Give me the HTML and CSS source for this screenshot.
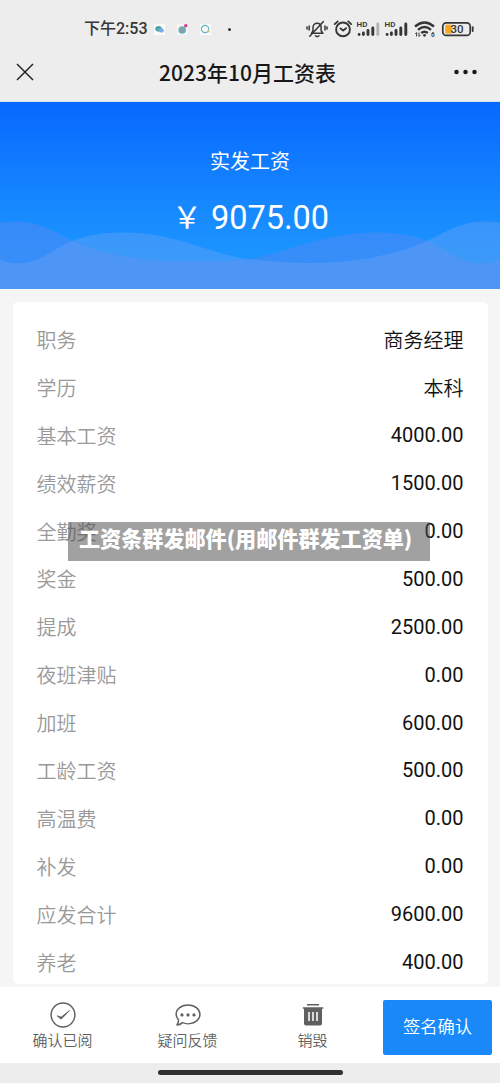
FILE: index.html
```html
<!DOCTYPE html>
<html lang="zh-CN">
<head>
<meta charset="utf-8">
<title>2023年10月工资表</title>
<link rel="stylesheet" href="styles.css">
</head>
<body>
<div class="screen">
  <div class="status">
    <span class="time">下午2:53</span>
    <span class="apps">
      <svg width="11" height="11" viewBox="0 0 11 11"><rect width="11" height="11" fill="#fafafa"/><ellipse cx="4.6" cy="4.8" rx="3.3" ry="2.8" fill="#4ba5a5"/><ellipse cx="7.3" cy="6.4" rx="2.6" ry="2.2" fill="#79aeea"/></svg>
      <svg width="11" height="11" viewBox="0 0 11 11"><rect width="11" height="11" fill="#f6f6f6"/><circle cx="5.2" cy="6" r="3.8" fill="#6bb0b5"/><path d="M3 5h4M3 7h4" stroke="#a58b9a" stroke-width=".8"/><circle cx="8.8" cy="1.8" r="1.8" fill="#d6408a"/></svg>
      <svg width="11" height="11" viewBox="0 0 11 11"><rect width="11" height="11" fill="#fafafa"/><circle cx="5" cy="5" r="3.6" fill="none" stroke="#68b3c5" stroke-width="1.2"/><path d="M7 8l2.6-.8" stroke="#e0c65a" stroke-width="1.5"/></svg>
    </span>
    <i class="dot"></i>
    <svg class="sys" width="170" height="22" viewBox="305 18 170 22" fill="none" stroke="#363636">
      <g stroke-width="1.5" stroke-linecap="round" stroke-linejoin="round">
        <path d="M311.5 33.3h11.4l-1.8-2.6v-3.2c0-2.4-1.6-4.3-4-4.3s-4.1 1.9-4.1 4.3v3.2z"/>
        <path d="M315.4 35.8q1.8 1.6 3.6 0M309.8 36.2l13.6-14.7M309.2 26v4M325 26v4M307 27v2M327 27v2"/>
        <circle cx="343" cy="29.4" r="6.9" stroke-width="1.9"/><path d="M340.5 28.4l2.7 2.2 2.8-2.4M334.7 24.1l3-2.7M351.2 24.1l-3-2.7" stroke-width="1.9"/>
      </g>
      <g stroke-width="2.9" stroke-linecap="round">
        <path d="M359.1 34.5v.1M363.4 33v1.5M368 30.5v4M372.8 28v6.5"/><path d="M377.8 24v10.5" stroke="#b3b3b3"/>
        <path d="M387.1 34.5v.1M391.4 33v1.5M396 30.5v4M400.8 28v6.5M405.8 24v10.5"/>
      </g>
      <g stroke-width="2.4"><path d="M415 26.5q9.5-8 19 0M418 29.8q6.5-5.4 13 0M421.2 33q3.4-2.6 6.6 0"/></g>
      <circle cx="424.5" cy="35.3" r="1.4" fill="#363636" stroke="none"/>
      <path d="M416.6 36.4v-3.8l-1.3 1.3M419 32.6v3.8l1.3-1.3" stroke-width="1"/>
      <rect x="442.8" y="22.8" width="27.4" height="12.6" rx="3.4" stroke-width="1.7"/>
      <rect x="445.3" y="24.8" width="7" height="8.6" rx="1" fill="#f5a623" stroke="none"/>
      <path d="M472.7 27.2v3.8" stroke-width="1.8" stroke-linecap="round"/>
      <g class="sysnum" fill="#363636" stroke="none"><text x="356.5" y="27" font-size="8">HD</text><text x="384.5" y="27" font-size="8">HD</text><text x="431" y="37" font-size="6.5">6</text><text class="level" x="450.5" y="33.2" font-size="11.5">30</text></g>
    </svg>
  </div>
  <div class="nav">
    <svg width="18" height="18" viewBox="0 0 18 18"><path d="M1 1l16 16M17 1L1 17" stroke="#222" stroke-width="1.5"/></svg>
    <h1>2023年10月工资表</h1>
    <svg width="23" height="6" viewBox="0 0 23 6" fill="#181818"><circle cx="2.5" cy="3" r="2.25"/><circle cx="11.5" cy="3" r="2.25"/><circle cx="20.5" cy="3" r="2.25"/></svg>
  </div>
  <div class="hero">
    <svg class="wave" width="500" height="72" viewBox="0 0 500 72">
      <path d="M0 5.5C28 2 43 8 63 19C112 47 180 46 249 42.5C292 34 325 14 385 15.5C423 17 440 30 457 40Q477 51 500 43V72H0z" fill="#5a87f2" fill-opacity=".45"/>
      <path d="M0 43Q24 51 43 40C60 30 78 16 118 15.5C176 14 210 38 251 42.5C326 51 388 44 437 19C457 8 473 2 500 5.5V72H0z" fill="#70a4f2" fill-opacity=".38"/>
    </svg>
    <div class="caption">实发工资</div>
    <div class="amount"><span class="yen">￥</span>9075.00</div>
  </div>
  <div class="content">
    <div class="card">
      <div class="row"><span>职务</span><b class="cjk">商务经理</b></div>
      <div class="row"><span>学历</span><b class="cjk">本科</b></div>
      <div class="row"><span>基本工资</span><b>4000.00</b></div>
      <div class="row"><span>绩效薪资</span><b>1500.00</b></div>
      <div class="row"><span>全勤奖</span><b>0.00</b></div>
      <div class="row"><span>奖金</span><b>500.00</b></div>
      <div class="row"><span>提成</span><b>2500.00</b></div>
      <div class="row"><span>夜班津贴</span><b>0.00</b></div>
      <div class="row"><span>加班</span><b>600.00</b></div>
      <div class="row"><span>工龄工资</span><b>500.00</b></div>
      <div class="row"><span>高温费</span><b>0.00</b></div>
      <div class="row"><span>补发</span><b>0.00</b></div>
      <div class="row"><span>应发合计</span><b>9600.00</b></div>
      <div class="row"><span>养老</span><b>400.00</b></div>
    </div>
  </div>
  <div class="footer">
    <div class="action">
      <svg width="26" height="26" viewBox="0 0 26 26" fill="none" stroke="#606060"><circle cx="13" cy="13" r="11.9" stroke-width="1.5"/><path d="M7.3 13.9l3.9 3.2 8.2-8.4-8.2 6.5z" fill="#606060" stroke-width="1" stroke-linejoin="round"/></svg>
      <span>确认已阅</span>
    </div>
    <div class="action">
      <svg width="26" height="26" viewBox="0 0 26 26" fill="none" stroke="#606060"><path d="M3.5 17.8C-.1 13.5.6 8.8 4.3 5.9 9 2 17 2 21.7 5.9c4.3 3.5 4.3 9.4 0 13-3.9 3.2-9.8 3.5-14.2 1.7-1.7 1.6-3.5 2.3-5.5 2.3 1-1.6 1.7-3.2 1.5-5.1z" stroke-width="1.5" stroke-linejoin="round"/><g fill="#606060" stroke="none"><circle cx="7" cy="12.9" r="1.6"/><circle cx="13" cy="12.9" r="1.6"/><circle cx="19" cy="12.9" r="1.6"/></g></svg>
      <span>疑问反馈</span>
    </div>
    <div class="action">
      <svg width="26" height="26" viewBox="0 0 26 26"><path d="M7 2.7h12M2.8 6h20.5" stroke="#606060" stroke-width="1.5"/><path d="M4 6h18v15.500q0 2-2 2H6q-2 0-2-2z" fill="#606060"/><path d="M9 10v9M13 10v9M17 10v9" stroke="#fff" stroke-width="1.5"/></svg>
      <span>销毁</span>
    </div>
    <div class="sign">签名确认</div>
  </div>
  <div class="home"><i></i></div>
  <div class="banner">工资条群发邮件(用邮件群发工资单)</div>
</div>
</body>
</html>
```
FILE: styles.css
```css
* { box-sizing: border-box; }
body { margin: 0; background: #ededed; font-family: Roboto, "Noto Sans CJK SC", sans-serif; }
svg { display: block; flex: none; }
.screen { position: relative; width: 500px; height: 1083px; display: flex; flex-direction: column; overflow: hidden; }
.status { height: 50px; padding: 8px 25px 0 84px; display: flex; align-items: center; color: #363636; }
.time { width: 70px; font: 500 16px/20px Roboto, "Noto Sans CJK SC", sans-serif; white-space: nowrap; }
.apps { display: flex; gap: 12px; }
.dot { width: 3px; height: 3px; margin-left: 17px; border-radius: 50%; background: #333; }
.sys { margin-left: auto; }
.sysnum { font-family: Roboto, sans-serif; font-weight: 600; }
.level { font-weight: 500; }
.nav { height: 52px; padding: 0 23px 8px 16px; display: flex; align-items: center; justify-content: space-between; border-bottom: 1px solid #d5e0ea; }
.nav h1 { margin: 1px 0 0 7px; font: 500 21px/30px "Noto Sans CJK SC", sans-serif; color: #181818; }
.hero { position: relative; height: 187px; padding-top: 45px; text-align: center; color: #fff; background: linear-gradient(#0768ff, #1789ff 57%, #1b94ff 80%, #1b94ff); }
.wave { position: absolute; left: 0; bottom: 0; }
.caption { position: relative; font-size: 20px; line-height: 30px; }
.amount { position: relative; display: flex; align-items: center; justify-content: center; margin-top: 17px; padding-left: 5px; font-size: 32.5px; line-height: 42px; }
.yen { width: 39px; margin-left: -4px; padding-bottom: 6px; font-family: "Noto Sans CJK SC", sans-serif; font-size: 30px; text-align: left; }
.content { height: 698px; padding: 13px 12.5px 3px; background: #f5f5f5; }
.card { height: 682px; padding: 14px 24px 0; border-radius: 5px; background: #fff; }
.row { height: 47.9px; display: flex; align-items: center; justify-content: space-between; font-size: 20px; line-height: 30px; }
.row span { padding-top: 2px; color: #999; font-weight: 350; }
.row b { font-weight: 400; color: #111; padding-bottom: 1px; }
.row .cjk { padding: 2px 0 0; font-weight: 350; }
.footer { height: 76px; display: flex; background: #fff; }
.action { width: 125px; padding-top: 15px; display: flex; flex-direction: column; align-items: center; color: #606060; font-size: 15px; font-weight: 350; line-height: 24px; }
.action span { margin-top: 1px; }
.sign { width: 109px; height: 55px; margin: 13px 0 0 8px; border-radius: 2px; background: #1989fa; color: #fff; text-align: center; font-size: 17.3px; font-weight: 350; line-height: 54px; }
.home { height: 20px; padding-top: 7px; }
.home i { display: block; width: 185px; height: 5px; margin: 0 auto; border-radius: 3px; background: #303030; }
.banner { position: absolute; left: 68px; top: 522px; width: 362px; height: 39px; padding-left: 11px; background: rgba(70, 70, 70, .51); color: #fff; font: 900 21.1px/33px "Noto Sans CJK SC", sans-serif; white-space: nowrap; }
```
